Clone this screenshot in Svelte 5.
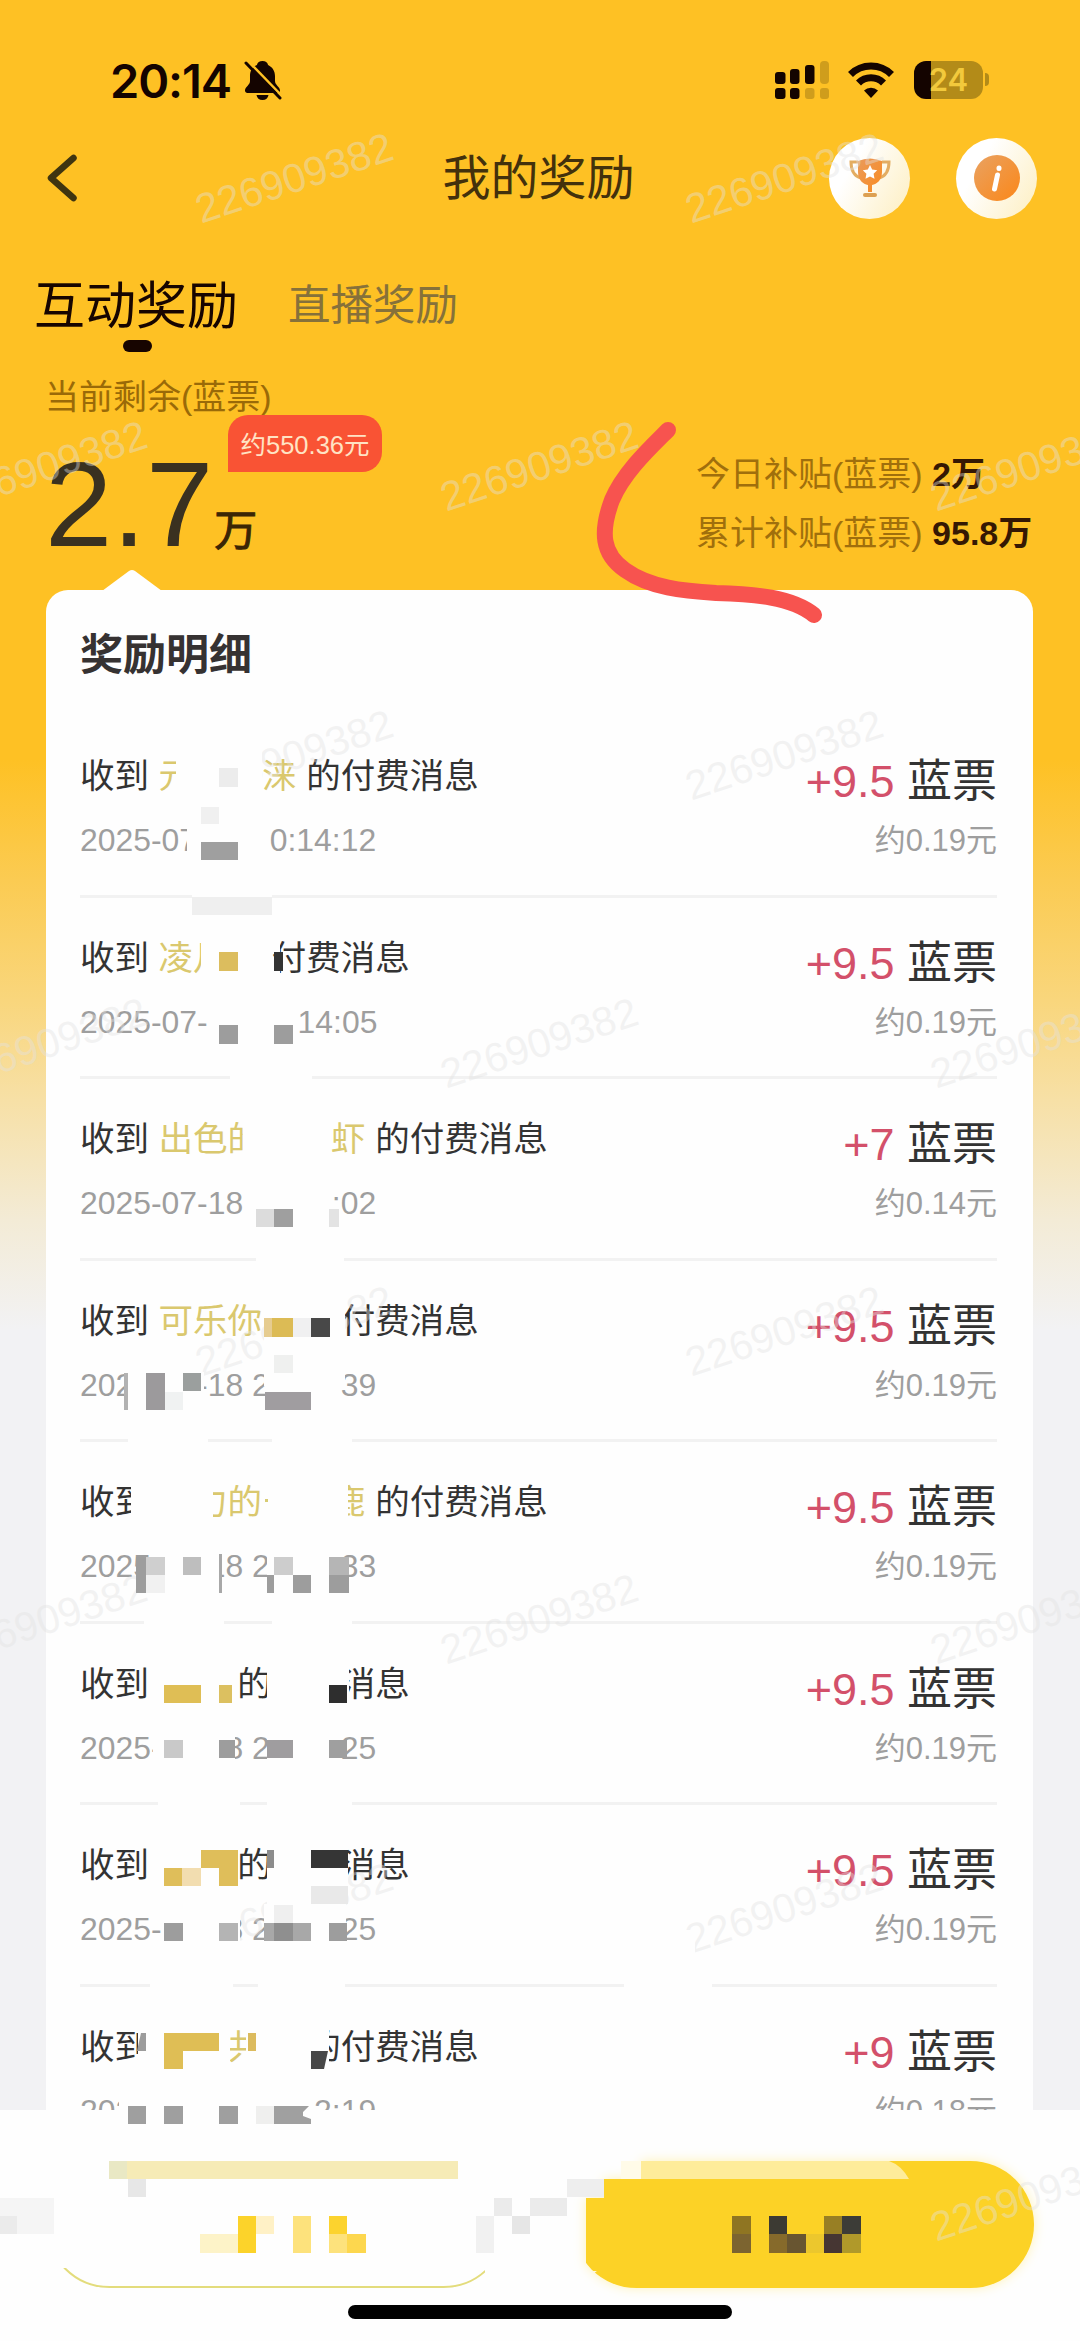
<script>
  // A number inside `name`, `tail` or `when` is an empty run, in em.
  const ROWS = [
    { name: ['元', 2, '涞'], tail: [' 的付费消息'], when: ['2025-07', 2.279, '0:14:12'], amount: '+9.5', yuan: '0.19' },
    { name: ['凌月'], tail: [1.278, '付费消息'], when: ['2025-07-', 2.82, '14:05'], amount: '+9.5', yuan: '0.19' },
    { name: ['出色的', 2, '虾'], tail: [' 的付费消息'], when: ['2025-07-18', 2.78, ':02'], amount: '+7', yuan: '0.14' },
    { name: ['可乐你', 1], tail: [1.278, '付费消息'], when: ['202', 2.001, '-18 2', 2.224, '39'], amount: '+9.5', yuan: '0.19' },
    { name: [1, '力的', 2, '鹿'], tail: [' 的付费消息'], when: ['2025', 1.778, '18 2', 2.224, '33'], amount: '+9.5', yuan: '0.19' },
    { name: [2], tail: [' 的', 2, '消息'], when: ['2025-', 2.001, '8 2', 2.224, '25'], amount: '+9.5', yuan: '0.19' },
    { name: [2], tail: [' 的', 2, '消息'], when: ['2025-', 2.001, '8 2', 2.224, '25'], amount: '+9.5', yuan: '0.19' },
    { name: [2, '共', 1], tail: [' 的付费消息'], when: ['202', 5.67, '2:19'], amount: '+9', yuan: '0.18' },
  ];

  const STATS = [
    { label: '今日补贴(蓝票)', value: '2万' },
    { label: '累计补贴(蓝票)', value: '95.8万' },
  ];

  const MARKS = [
    [294, 178], [784, 178],
    [48, 466], [539, 466], [1029, 466],
    [294, 755], [784, 755],
    [48, 1043], [539, 1043], [1029, 1043],
    [294, 1331], [784, 1331],
    [48, 1619], [539, 1619], [1029, 1619],
    [294, 1908], [784, 1908],
    [1029, 2196],
  ];

  // x, y, width, height
  const COVERS = [
    [176, 750, 86, 56], [187, 822, 20, 38], [192, 893, 80, 8],
    [201, 932, 70, 48], [230, 1074, 82, 8], [274, 935, 6, 38],
    [243, 1115, 78, 48], [256, 1255, 88, 8],
    [264, 1296, 81, 90], [128, 1372, 12, 34], [265, 1368, 14, 38], [196, 1372, 8, 34],
    [128, 1437, 80, 8], [272, 1437, 80, 8],
    [131, 1478, 82, 52], [266, 1478, 82, 52], [207, 1550, 15, 44], [267, 1550, 14, 44],
    [144, 1618, 80, 8], [272, 1618, 80, 8],
    [267, 1660, 82, 50], [218, 1732, 17, 40], [267, 1732, 14, 40], [153, 1732, 11, 34],
    [158, 1800, 82, 8], [267, 1800, 85, 8],
    [267, 1842, 81, 62], [162, 1904, 78, 60], [264, 1904, 82, 44], [686, 1930, 9, 32],
    [150, 1981, 83, 8], [258, 1981, 87, 8], [624, 1981, 88, 8],
    [138, 2020, 10, 52], [220, 2020, 10, 52], [246, 2020, 83, 52], [119, 2090, 22, 22],
  ];

  // x, y, width, height, colour
  const BLOCKS = [
    [219, 768, 19, 19, '#ececec'], [201, 807, 18, 17, '#f0f0f0'],
    [201, 842, 37, 18, '#9f9f9f'], [192, 897, 80, 18, '#efefef'],
    [219, 952, 19, 19, '#dcbd5e'], [274, 952, 9, 19, '#333'],
    [219, 1025, 19, 19, '#9d9d9d'], [274, 1025, 19, 19, '#9d9d9d'],
    [256, 1209, 18, 18, '#dcdcdc'], [274, 1209, 19, 18, '#9f9f9f'], [329, 1209, 10, 18, '#e3e3e3'],
    [264, 1318, 8, 19, '#e6cc90'], [272, 1318, 21, 19, '#dcbb55'], [293, 1318, 18, 19, '#f0f0f1'],
    [311, 1318, 19, 19, '#484848'], [274, 1355, 19, 18, '#eff0ef'],
    [124, 1373, 4, 37, '#b2b2b2'], [146, 1373, 19, 37, '#9c9a9c'], [165, 1392, 18, 18, '#f0f2f2'],
    [183, 1373, 18, 18, '#9b9f9e'], [265, 1392, 46, 18, '#a09da0'],
    [265, 1499, 3, 3, '#d8cc74'],
    [136, 1557, 10, 36, '#9d9d9d'], [146, 1557, 19, 18, '#cfcfcf'], [146, 1575, 19, 18, '#f1f1f1'],
    [183, 1557, 18, 18, '#bebebe'], [219, 1554, 3, 39, '#a8a8a8'], [274, 1557, 19, 18, '#cdcdcd'],
    [267, 1575, 7, 18, '#9d9d9d'], [293, 1575, 18, 18, '#9d9d9d'],
    [329, 1557, 20, 18, '#b5b5b5'], [329, 1575, 20, 18, '#9d9d9d'],
    [164, 1685, 37, 18, '#dfbe55'], [219, 1685, 13, 18, '#dcc060'], [329, 1685, 18, 18, '#2e2e2e'],
    [164, 1740, 19, 18, '#c9c9c9'], [219, 1740, 16, 18, '#9d9d9d'], [267, 1740, 26, 18, '#9f9d9f'],
    [329, 1740, 18, 18, '#9f9f9f'],
    [201, 1850, 37, 18, '#dfbe5a'], [219, 1868, 19, 18, '#dfbe5a'], [164, 1868, 18, 18, '#dfbe5a'],
    [182, 1868, 19, 18, '#f2ddb0'], [267, 1850, 7, 18, '#8c8c8c'], [311, 1850, 37, 18, '#353535'],
    [311, 1886, 37, 18, '#e9e9e9'], [274, 1905, 19, 18, '#efefef'],
    [164, 1923, 19, 18, '#9d9d9d'], [219, 1923, 19, 18, '#b4b4b4'], [264, 1923, 10, 18, '#a8a8a8'],
    [274, 1923, 19, 18, '#8f8f8f'], [293, 1923, 18, 18, '#a8a8a8'], [329, 1923, 18, 18, '#9d9d9d'],
    [164, 2033, 55, 18, '#dfbe55'], [164, 2051, 19, 18, '#dfbe55'], [248, 2033, 8, 18, '#dcbb5e'],
    [128, 2106, 18, 18, '#9f9f9f'], [164, 2106, 19, 18, '#9f9f9f'], [219, 2106, 19, 18, '#9f9f9f'],
    [256, 2106, 18, 18, '#efefee'],
    [109, 2161, 349, 18, '#f6ebb6'], [109, 2161, 18, 18, '#e9e8c4'], [128, 2179, 18, 18, '#e7e7e7'],
    [200, 2234, 38, 19, '#fdf3c8'], [238, 2216, 18, 37, '#fcd32a'], [256, 2216, 18, 18, '#fff1c6'],
    [293, 2216, 18, 37, '#fde27c'], [329, 2216, 18, 18, '#fcd32e'], [329, 2234, 18, 19, '#fde27c'],
    [347, 2234, 19, 19, '#fdd74e'],
    [0, 2198, 54, 36, '#f5f5f5'], [0, 2216, 17, 18, '#ebebeb'],
    [494, 2198, 18, 18, '#ebebeb'], [512, 2216, 18, 18, '#e6e6e6'], [530, 2198, 37, 18, '#ebebeb'],
    [476, 2216, 18, 37, '#f1f1f1'], [567, 2179, 37, 18, '#eee'], [621, 2161, 20, 18, '#fffbe8'],
    [732, 2216, 19, 18, '#8f7522'], [732, 2234, 19, 19, '#7c6430'],
    [769, 2216, 18, 18, '#3c3a33'], [769, 2234, 18, 19, '#866a2b'], [787, 2234, 19, 19, '#685531'],
    [806, 2234, 18, 19, '#ecc72d'], [824, 2216, 18, 18, '#987f24'], [842, 2216, 19, 18, '#3c3c37'],
    [824, 2234, 18, 19, '#463633'], [842, 2234, 19, 19, '#b0992a'],
  ];
</script>

{#snippet run(parts)}{#each parts as part}{#if typeof part === 'number'}<i class="gap" style="width: {part}em"></i>{:else}{part}{/if}{/each}{/snippet}

<div class="page">
  <header class="status">
    <div class="clock">
      <span class="time">20:14</span>
      <svg width="38" height="42" viewBox="0 0 38 42">
        <path d="M18.500 2c-3 0-5 1.600-5.600 3.900C8.500 8 6 12 6 17v5c0 4-5 6-5 9.500C1 33 2 34 3.500 34h30c1.500 0 2.500-1 2.500-2.500 0-3.500-5-5.500-5-9.500v-5c0-5-2.500-9-6.900-11.100C23.500 3.600 21.500 2 18.500 2z" />
        <path d="M12.500 36h12c-.5 3-2.600 5-6 5s-5.500-2-6-5z" />
        <path class="cut" d="M4.500 2.500l34 35" />
        <path class="slash" d="M2 4l34 35" />
      </svg>
    </div>
    <div class="signals">
      <svg width="56" height="40" viewBox="0 0 56 40">
        <rect x="0" y="12" width="10.500" height="12" rx="3" />
        <rect x="15" y="9" width="9.500" height="15" rx="3" />
        <rect x="30" y="5" width="9.500" height="19" rx="3" />
        <rect class="off" x="45" y="1" width="9" height="23" rx="4" />
        <rect x="0" y="28" width="10.500" height="11" rx="3" />
        <rect x="15" y="28" width="9.500" height="11" rx="3" />
        <rect class="off" x="30" y="28" width="9.500" height="11" rx="3" />
        <rect class="off" x="45" y="28" width="9" height="11" rx="3" />
      </svg>
      <svg class="wifi" width="48" height="36" viewBox="0 0 48 36">
        <path class="wave" d="M3.500 12.500a29 29 0 0 1 41 0M11.500 21a17.500 17.500 0 0 1 25 0" />
        <path d="M24 36l-7-7.500a10 10 0 0 1 14 0z" />
      </svg>
      <div class="battery"><span>24</span></div>
    </div>
  </header>

  <nav class="bar">
    <button class="back" aria-label="返回">
      <svg width="32" height="50" viewBox="0 0 32 50"><path d="M27.500 5L5 25l22.500 20" /></svg>
    </button>
    <h1>我的奖励</h1>
    <div class="actions">
      <button class="round" aria-label="排行">
        <svg width="44" height="42" viewBox="0 0 44 42">
          <defs>
            <linearGradient id="cup" x1="0" y1="0" x2="1" y2="1">
              <stop offset="0" stop-color="#e99b5c" />
              <stop offset="1" stop-color="#fb8a1e" />
            </linearGradient>
          </defs>
          <path class="handle" d="M10 5H3c0 9 3 14 10 16M34 5h7c0 9-3 14-10 16" />
          <path fill="url(#cup)" d="M10 4q12-5 24 0v11c0 8-5 12-10 13v7h-4v-7c-5-1-10-5-10-13z" />
          <rect fill="#dca052" x="15" y="36" width="14" height="4" rx="2" />
          <path fill="#fff" d="M22 8l2.200 4.600 5 .7-3.600 3.500.9 5L22 19.400l-4.500 2.400.9-5-3.600-3.500 5-.7z" />
        </svg>
      </button>
      <button class="round" aria-label="说明">
        <span class="info">
          <svg width="16" height="28" viewBox="0 0 16 28"><path d="M8.500 11L5.500 25M10 4v.5" /></svg>
        </span>
      </button>
    </div>
  </nav>

  <div class="tabs">
    <span class="tab active">互动奖励</span>
    <span class="tab">直播奖励</span>
  </div>

  <section class="summary">
    <div class="balance">
      <div class="label">当前剩余(蓝票)</div>
      <div class="total">
        <span class="number">2.7</span><span class="unit">万</span>
        <span class="badge">约550.36元</span>
      </div>
    </div>
    <div class="stats">
      {#each STATS as stat}
        <div class="stat">{stat.label} <b>{stat.value}</b></div>
      {/each}
    </div>
  </section>

  <section class="card">
    <svg class="arrow" width="60" height="22" viewBox="0 0 60 22"><path d="M0 22L27 2q3-2 6 0l27 20z" /></svg>
    <div class="inner">
      <h2>奖励明细</h2>
      {#each ROWS as row}
        <div class="row">
          <div class="what">
            <div class="message">收到 <span class="name">{@render run(row.name)}</span>{@render run(row.tail)}</div>
            <div class="when">{@render run(row.when)}</div>
          </div>
          <div class="sum">
            <div class="amount"><span>{row.amount}</span> 蓝票</div>
            <div class="yuan">约{row.yuan}元</div>
          </div>
        </div>
      {/each}
    </div>
  </section>

  <footer>
    <div class="buttons">
      <div class="btn outline"></div>
      <div class="glow"><div class="btn solid"></div></div>
    </div>
    <div class="home"></div>
  </footer>

  <svg class="overlay" width="1080" height="2341" viewBox="0 0 1080 2341">
    {#each MARKS as [x, y]}
      <text class="mark" transform="translate({x} {y}) rotate(-18.500)" text-anchor="middle" dy="14">226909382</text>
    {/each}
    {#each COVERS as [x, y, w, h]}
      <rect {x} {y} width={w} height={h} fill="#fefefe" />
    {/each}
    {#each BLOCKS as [x, y, w, h, fill]}
      <rect {x} {y} width={w} height={h} {fill} shape-rendering="crispEdges" />
    {/each}
    <path fill="#9c9c9c" d="M141 2033h5v18h-9z" />
    <path fill="#484848" d="M311 2051h17l-4 18h-13z" />
    <path fill="#a0a0a0" d="M274 2106h35l-6 6v4l8 3v5h-37z" />
    <path fill="#feec9a" d="M641 2161h248q12 4 20 18H641z" />
    <path class="scribble" d="M668 430C650 448 624 472 612 500C600 532 602 554 625 570C650 588 684 591 716 593C754 594 792 597 814 615" />
  </svg>
</div>

<style>
  :global(body) {
    margin: 0;
  }

  .page {
    position: relative;
    display: flex;
    flex-direction: column;
    width: 1080px;
    height: 2341px;
    overflow: hidden;
    background: linear-gradient(#fec124 0, #fec124 760px, #fbcb52 880px, #f9d67c 1000px, #f7e0a6 1100px, #f3ebd6 1220px, #f2f2f4 1330px);
    font-family: "Liberation Sans", "Noto Sans CJK SC", sans-serif;
    color: #333;
  }

  button {
    border: none;
    padding: 0;
    background: none;
    font: inherit;
  }

  .status {
    display: flex;
    justify-content: space-between;
    align-items: center;
    box-sizing: border-box;
    height: 120px;
    padding: 40px 90px 0 110px;
    color: #140400;
  }

  .clock,
  .signals {
    display: flex;
    align-items: center;
  }

  .clock {
    gap: 13px;
  }

  .time {
    font: 600 47px/1 Inter, "Liberation Sans", sans-serif;
    letter-spacing: -1.1px;
  }

  .status svg {
    display: block;
    fill: #140400;
  }

  .cut,
  .slash {
    stroke: #fec124;
    stroke-width: 2.5;
  }

  .slash {
    stroke: #140400;
    stroke-width: 3;
    stroke-linecap: round;
  }

  .signals {
    gap: 19px;
  }

  .signals .wifi {
    margin-left: -3px;
  }

  .signals .off {
    fill: #cf9d1c;
  }

  .wave {
    fill: none;
    stroke: #140400;
    stroke-width: 7;
  }

  .battery {
    position: relative;
    width: 69px;
    height: 38px;
    margin-right: 7px;
    border-radius: 12px;
    background: linear-gradient(90deg, #140400 17px, #b38b18 17px);
    color: #f2c93c;
    font: 600 31px/38px Inter, "Liberation Sans", sans-serif;
    text-align: center;
  }

  .battery::after {
    content: "";
    position: absolute;
    left: 71px;
    top: 12px;
    width: 4px;
    height: 13px;
    border-radius: 0 5px 5px 0;
    background: #b38b18;
  }

  .bar {
    display: grid;
    grid-template-columns: 1fr auto 1fr;
    align-items: center;
    height: 116px;
    padding: 0 43px 0 46px;
  }

  .back svg {
    display: block;
    fill: none;
    stroke: #3f3510;
    stroke-width: 6.5;
    stroke-linecap: round;
    stroke-linejoin: round;
  }

  h1 {
    margin: 2px 6px 0 0;
    font-size: 48px;
    font-weight: 400;
    line-height: 60px;
    color: #43310c;
  }

  .actions {
    display: flex;
    justify-content: flex-end;
    gap: 46px;
    margin-left: -6px;
  }

  .round {
    display: flex;
    align-items: center;
    justify-content: center;
    width: 81px;
    height: 81px;
    border-radius: 50%;
    background: linear-gradient(120deg, #fff 30%, #fdeec0);
  }

  .round svg {
    display: block;
  }

  .handle {
    fill: none;
    stroke: #e3ad62;
    stroke-width: 3;
  }

  .info {
    display: flex;
    align-items: center;
    justify-content: center;
    width: 46px;
    height: 46px;
    border-radius: 50%;
    background: linear-gradient(135deg, #e9a262, #fb8718);
  }

  .info path {
    stroke: #fff;
    stroke-width: 5;
    stroke-linecap: round;
  }

  .tabs {
    display: flex;
    align-items: center;
    gap: 50px;
    height: 138px;
    padding-left: 34px;
  }

  .tab {
    position: relative;
    padding-top: 2px;
    font-size: 42.5px;
    line-height: 60px;
    color: #86713a;
  }

  .tab.active {
    padding-top: 4px;
    font-size: 51px;
    color: #170500;
  }

  .tab.active::after {
    content: "";
    position: absolute;
    left: 89px;
    top: 67px;
    width: 29px;
    height: 12px;
    border-radius: 6px;
    background: #170500;
  }

  .summary {
    display: flex;
    justify-content: space-between;
    height: 216px;
    padding: 0 40px 0 45px;
  }

  .label {
    font-size: 34px;
    line-height: 46px;
    color: #9a6a08;
  }

  .total {
    position: relative;
    display: flex;
    align-items: baseline;
    margin-top: 24px;
  }

  .number {
    font-size: 121px;
    line-height: 121px;
    color: #3a3120;
  }

  .unit {
    font-size: 43px;
    line-height: 60px;
    margin-left: 1px;
    color: #3b2605;
    -webkit-text-stroke: 1px #3b2605;
  }

  .badge {
    position: absolute;
    left: 183px;
    top: -29px;
    width: 154px;
    height: 57px;
    border-radius: 20px 20px 20px 0;
    background: #f95334;
    color: #ffe3c4;
    font-size: 25.500px;
    line-height: 60px;
    text-align: center;
    white-space: nowrap;
  }

  .stats {
    width: 344px;
    padding-top: 71px;
  }

  .stat {
    font-size: 34px;
    line-height: 59px;
    color: #a06f0c;
    white-space: nowrap;
  }

  .stat b {
    color: #351803;
  }

  .card {
    position: relative;
    flex: 1;
    min-height: 0;
    margin: 0 47px 0 46px;
    border-radius: 22px 22px 0 0;
    background: #fefefe;
  }

  .arrow {
    position: absolute;
    left: 56px;
    top: -21px;
    fill: #fefefe;
  }

  .inner {
    box-sizing: border-box;
    height: 100%;
    padding: 35px 36px 0 34px;
    overflow: hidden;
  }

  h2 {
    margin: 0 0 31px;
    font-size: 43px;
    font-weight: 700;
    line-height: 60px;
    color: #363232;
  }

  .row {
    display: flex;
    justify-content: space-between;
    box-sizing: border-box;
    height: 181.5px;
    padding-top: 37px;
    border-bottom: 3px solid #f2f2f2;
    white-space: nowrap;
  }

  .message {
    height: 46px;
    font-size: 34.5px;
    line-height: 46px;
  }

  .name {
    color: #dac86e;
  }

  .gap {
    display: inline-block;
  }

  .when {
    margin-top: 18px;
    font-size: 31.9px;
    line-height: 46px;
    color: #9e9e9e;
  }

  .sum {
    text-align: right;
  }

  .amount {
    height: 56px;
    margin-top: 1px;
    font-size: 45px;
    line-height: 56px;
  }

  .amount span {
    color: #d3506a;
  }

  .yuan {
    margin-top: 8px;
    font-size: 31px;
    line-height: 46px;
    color: #9e9e9e;
  }

  footer {
    display: flex;
    flex-direction: column;
    align-items: center;
    height: 231px;
    background: #fefefe;
  }

  .buttons {
    display: flex;
    gap: 66px;
    margin-top: 51px;
  }

  .btn {
    box-sizing: border-box;
    width: 461px;
    height: 127px;
    border-radius: 64px;
  }

  .outline {
    border: 2px solid #e3dc7c;
    clip-path: inset(107px 22px 0 13px);
  }

  .glow {
    filter: drop-shadow(0 0 6px #fff3b8);
  }

  .solid {
    background: #fcd226;
    clip-path: polygon(68px 0, 100% 0, 100% 100%, 0 100%, 24px 110px, 13px 110px, 13px 37px, 31px 37px, 31px 18px, 68px 18px);
  }

  .home {
    width: 384px;
    height: 14px;
    margin-top: 17px;
    border-radius: 7px;
    background: #000;
  }

  .overlay {
    position: absolute;
    left: 0;
    top: 0;
    pointer-events: none;
  }

  .mark {
    font-size: 41px;
    fill: rgba(226, 226, 226, 0.42);
  }

  .scribble {
    fill: none;
    stroke: #f7534f;
    stroke-width: 16;
    stroke-linecap: round;
  }
</style>
